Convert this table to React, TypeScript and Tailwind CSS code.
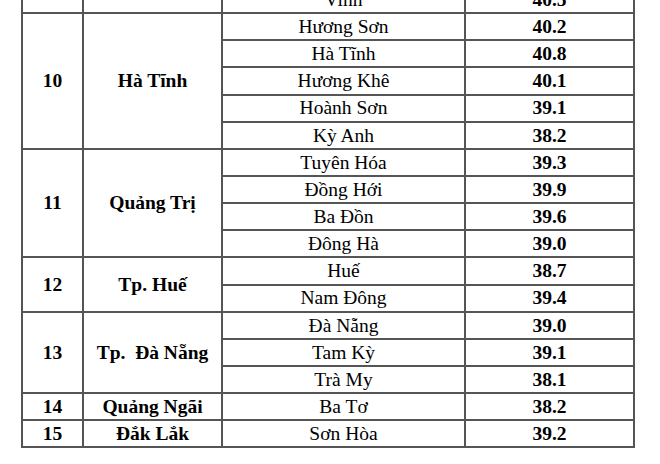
const groups: { no: string; province: string; rows: [string, string][] }[] = [
  {
    no: "10",
    province: "Hà Tĩnh",
    rows: [
      ["Hương Sơn", "40.2"],
      ["Hà Tĩnh", "40.8"],
      ["Hương Khê", "40.1"],
      ["Hoành Sơn", "39.1"],
      ["Kỳ Anh", "38.2"],
    ],
  },
  {
    no: "11",
    province: "Quảng Trị",
    rows: [
      ["Tuyên Hóa", "39.3"],
      ["Đồng Hới", "39.9"],
      ["Ba Đồn", "39.6"],
      ["Đông Hà", "39.0"],
    ],
  },
  {
    no: "12",
    province: "Tp. Huế",
    rows: [
      ["Huế", "38.7"],
      ["Nam Đông", "39.4"],
    ],
  },
  {
    no: "13",
    province: "Tp.\u00a0 Đà Nẵng",
    rows: [
      ["Đà Nẵng", "39.0"],
      ["Tam Kỳ", "39.1"],
      ["Trà My", "38.1"],
    ],
  },
  { no: "14", province: "Quảng Ngãi", rows: [["Ba Tơ", "38.2"]] },
  { no: "15", province: "Đắk Lắk", rows: [["Sơn Hòa", "39.2"]] },
];

const cell = "border-2 border-[#555] p-0 text-center align-middle";

export default function App() {
  return (
    <div className="h-[464px] w-[660px] overflow-hidden bg-white font-['Liberation_Serif','Times_New_Roman',serif] text-[19.5px] leading-none text-black">
      <table className="ml-[21px] mt-[-15px] table-fixed border-collapse">
        <colgroup>
          <col className="w-[61px]" />
          <col className="w-[139px]" />
          <col className="w-[243px]" />
          <col className="w-[169px]" />
        </colgroup>
        <tbody>
          <tr className="h-[27.15px]">
            <td className={cell} />
            <td className={cell} />
            <td className={cell}>Vinh</td>
            <td className={`${cell} font-bold`}>40.5</td>
          </tr>
          {groups.map((g) =>
            g.rows.map(([place, value], i) => (
              <tr key={g.no + place} className="h-[27.15px]">
                {i === 0 ? (
                  <>
                    <td rowSpan={g.rows.length} className={`${cell} font-bold`}>
                      {g.no}
                    </td>
                    <td rowSpan={g.rows.length} className={`${cell} whitespace-pre font-bold`}>
                      {g.province}
                    </td>
                  </>
                ) : null}
                <td className={cell}>{place}</td>
                <td className={`${cell} font-bold`}>{value}</td>
              </tr>
            ))
          )}
        </tbody>
      </table>
    </div>
  );
}
